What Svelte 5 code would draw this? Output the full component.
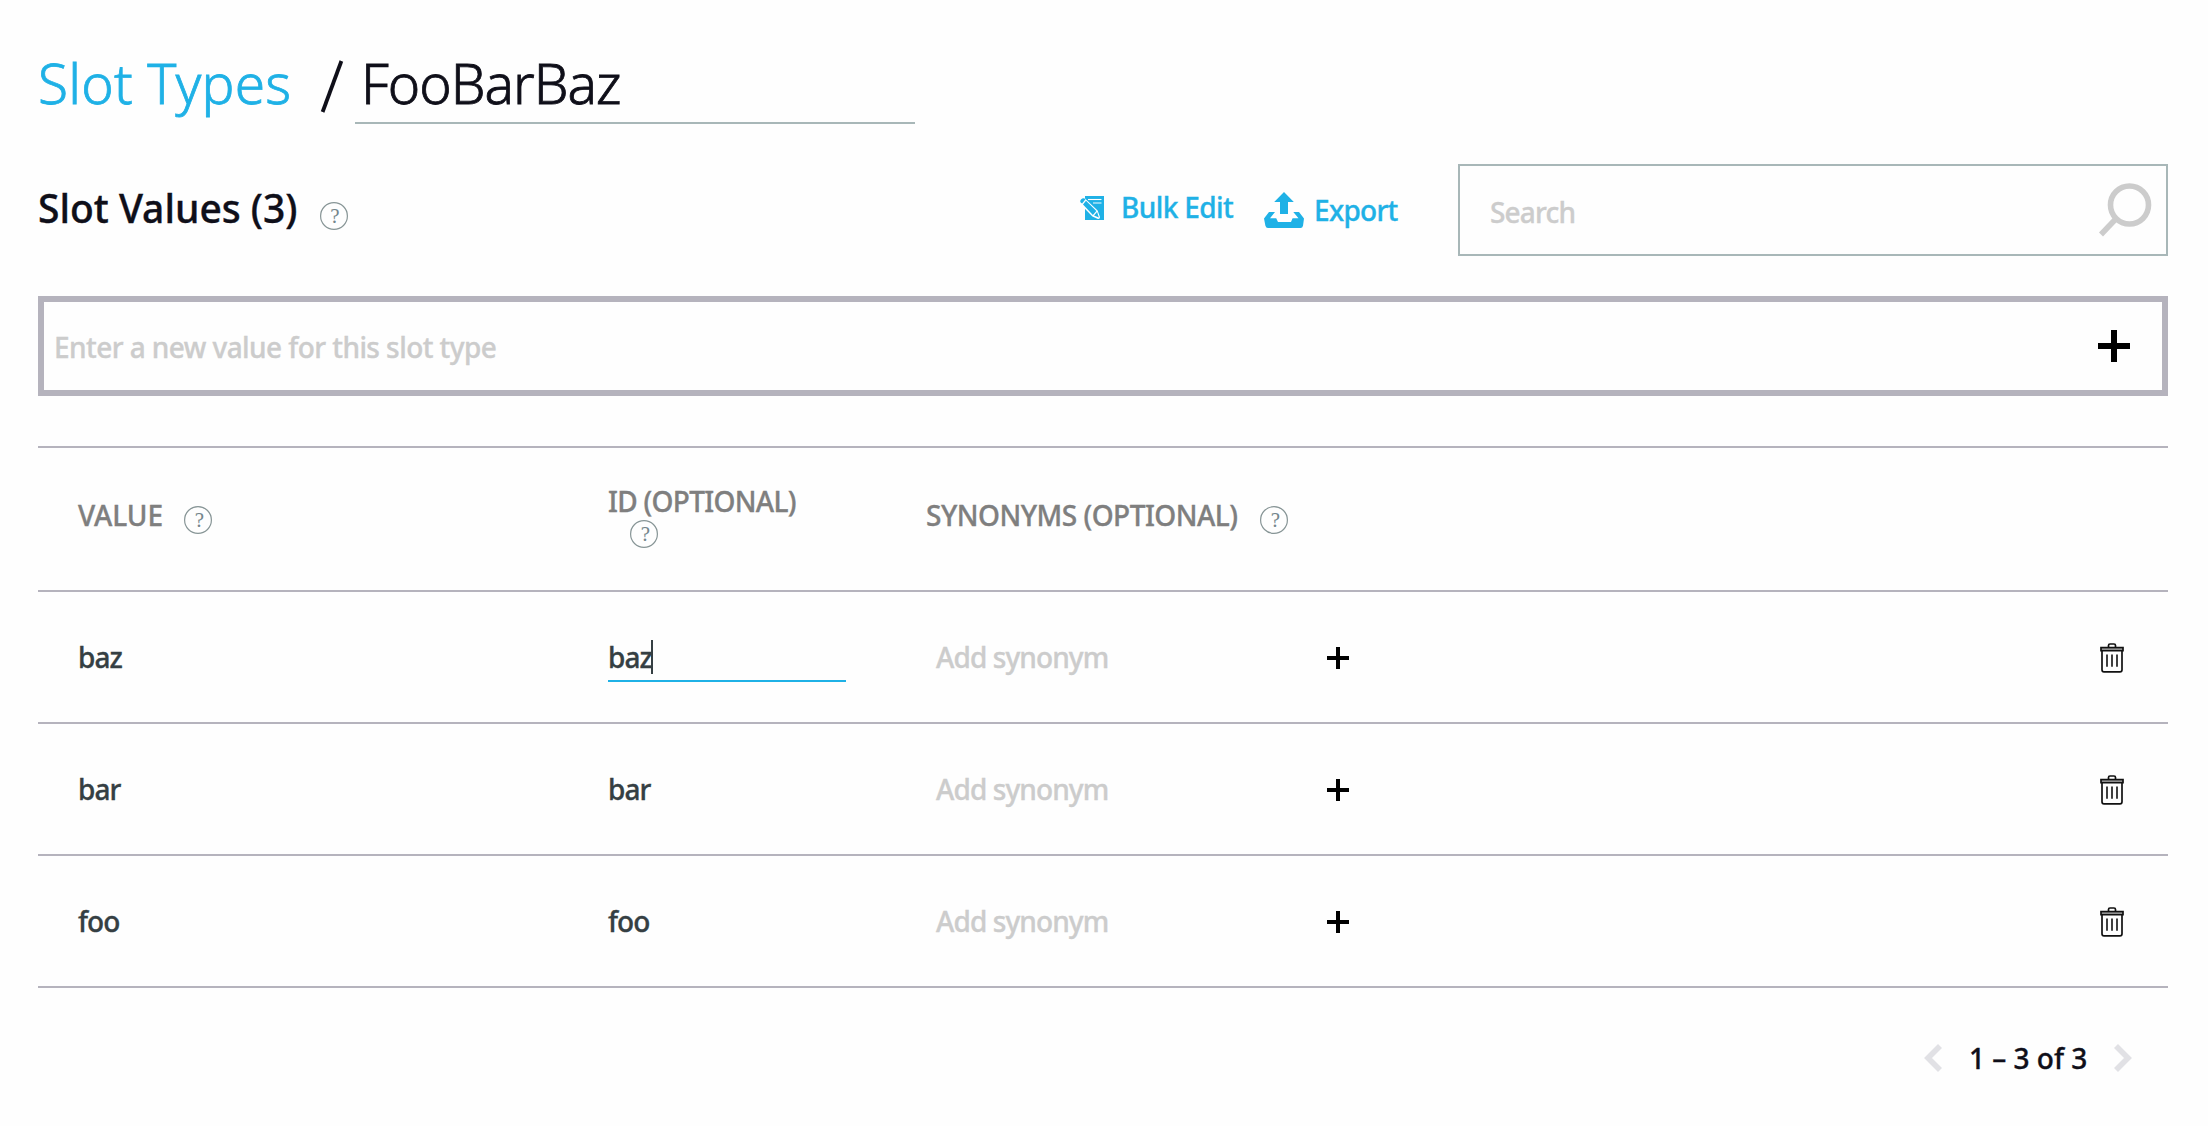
<script>
  let slotName = $state('FooBarBaz');
  let rows = $state([
    { value: 'baz', id: 'baz', editing: true },
    { value: 'bar', id: 'bar', editing: false },
    { value: 'foo', id: 'foo', editing: false }
  ]);
</script>

{#snippet help()}
  <svg class="help" viewBox="0 0 28 28" aria-label="Help">
    <circle cx="14" cy="14" r="13.4" />
    <text x="15" y="21" text-anchor="middle">?</text>
  </svg>
{/snippet}

{#snippet plus(size, thick)}
  <svg class="plus" width={size} height={size} viewBox="0 0 {size} {size}">
    <path d="M{size / 2} 0V{size}M0 {size / 2}H{size}" stroke-width={thick} />
  </svg>
{/snippet}

<main>
  <header>
    <a class="crumb">Slot Types</a>
    <svg class="slash" viewBox="0 0 22 51"><path d="M1.6 51L20.4 0" /></svg>
    <div class="name">{slotName}</div>
  </header>

  <section class="toolbar">
    <h2>Slot Values ({rows.length})</h2>
    <span class="title-help">{@render help()}</span>
    <a class="bulk">
      <svg width="24" height="24" viewBox="0 0 24 24">
        <path d="M5 0H24V24H5z" fill="#1fb1e6" />
        <path d="M8 3.5H21.5" stroke="#fff" stroke-width="1.1" />
        <path d="M13 7H21.5" stroke="#fff" stroke-width="1.6" opacity=".6" />
        <path d="M0 5.2Q0 4 1 3L2.6 1.9Q4 1.5 5 2.5L17.6 14.6L20 21Q20 23.2 18 23L12.4 20.4L.8 8.4Q0 7 0 5.2z" fill="#fff" />
        <path d="M.2 5.5Q.2 4.4 1.2 3.3T3.4 2.2Q4.6 2.2 5.5 3.3L2.1 7.4Q.2 6.4 .2 5.5z" fill="#1fb1e6" />
        <path d="M6 4.8L16.4 15L12.9 19L3 8.6z" fill="#1fb1e6" />
        <path d="M17.1 16L18.9 21.5L14 19.6z" fill="#1fb1e6" />
      </svg>
      <span>Bulk Edit</span>
    </a>
    <a class="export">
      <svg width="40" height="36" viewBox="0 0 40 36">
        <path d="M20 0L29.8 10H24V22H16V10H10.2z" fill="#1fb1e6" />
        <path d="M5 20H11L6 26.3H12.2L14 30H27L28.6 26.3H34.5L29.3 20H35L40 26.5L39 33.8Q38.5 36 36.5 36H4Q2 36 1.4 33.8L0 26.5z" fill="#1fb1e6" />
      </svg>
      <span>Export</span>
    </a>
    <div class="search">
      <span>Search</span>
      <svg width="54" height="54" viewBox="0 0 54 54">
        <circle cx="31.5" cy="22" r="19" />
        <path d="M18.2 35.5L3 51.5" />
      </svg>
    </div>
  </section>

  <section class="new-value">
    <span>Enter a new value for this slot type</span>
    {@render plus(32, 6)}
  </section>

  <section class="table">
    <div class="row head">
      <div class="cell"><span class="v">VALUE</span>{@render help()}</div>
      <div class="cell stacked"><span class="i">ID (OPTIONAL)</span>{@render help()}</div>
      <div class="cell"><span class="s">SYNONYMS (OPTIONAL)</span>{@render help()}</div>
    </div>
    {#each rows as row}
      <div class="row">
        <div class="cell">{row.value}</div>
        <div class="cell">
          <div class="field" class:editing={row.editing}>
            <span>{row.id}</span>{#if row.editing}<i class="caret"></i>{/if}
          </div>
        </div>
        <div class="cell synonyms">
          <span class="add">Add synonym</span>
          {@render plus(22, 4)}
          <svg class="trash" width="24" height="30" viewBox="0 0 24 30">
            <path d="M8.5 4V2.4Q8.5 1 10 1H14Q15.5 1 15.5 2.4V4" />
            <path d="M1 4.6H23V7.6H1z" fill="#bbb" />
            <path d="M2 8V26.7Q2 28.8 4 28.8H20Q22 28.8 22 26.7V8" />
            <path class="ribs" d="M7 11.5V23.8M12 11.5V23.8M17 11.5V23.8" />
          </svg>
        </div>
      </div>
    {/each}
  </section>

  <footer>
    <svg width="18" height="28" viewBox="0 0 18 28"><path d="M16 2L4 14L16 26" /></svg>
    <span>1 – {rows.length} of {rows.length}</span>
    <svg width="18" height="28" viewBox="0 0 18 28"><path d="M2 2L14 14L2 26" /></svg>
  </footer>
</main>

<style>
  :global(body) {
    background: #fefefe;
  }
  main {
    box-sizing: border-box;
    height: 1126px;
    padding: 41px 40px 0 38px;
    font: 500 28px/40px 'Noto Sans', 'Open Sans', sans-serif;
    color: #0f0f19;
    white-space: nowrap;
    overflow: hidden;
    -webkit-text-stroke: 0.35px;
  }
  svg {
    display: block;
    flex: none;
    fill: none;
    overflow: visible;
  }
  header {
    display: flex;
    height: 83px;
    font-size: 55px;
    font-weight: 300;
    line-height: 83px;
    -webkit-text-stroke: 0.8px;
  }
  .crumb {
    width: 283px;
    box-sizing: border-box;
    color: #1fb1e6;
    letter-spacing: 0.2px;
  }
  .slash {
    width: 22px;
    height: 51px;
    margin: 20px 12px 0 0;
    stroke: #0f0f19;
    stroke-width: 3.8;
  }
  .name {
    box-sizing: border-box;
    width: 560px;
    padding-left: 6px;
    border-bottom: 2px solid #a8b7b8;
    letter-spacing: -1px;
  }
  .toolbar {
    display: flex;
    align-items: center;
    height: 92px;
    margin-top: 40px;
  }
  h2 {
    width: 282px;
    margin: 0;
    padding: 0 0 5px;
    box-sizing: border-box;
    font-size: 39px;
    font-weight: 500;
    line-height: 50px;
    letter-spacing: 0;
  }
  .title-help {
    padding-top: 12px;
  }
  .help {
    width: 28px;
    height: 28px;
    stroke: #879596;
    stroke-width: 1.2;
  }
  .help text {
    fill: #74868c;
    stroke: none;
    font: 400 21px 'Liberation Serif', serif;
  }
  .bulk,
  .export {
    display: flex;
    align-items: center;
    color: #1fb1e6;
  }
  .bulk {
    width: 184px;
    margin-left: 732px;
    padding-bottom: 6px;
    gap: 17px;
    letter-spacing: -0.6px;
  }
  .bulk svg {
    margin-top: 2px;
  }
  .export {
    width: 194px;
    gap: 10px;
    padding-bottom: 2px;
    letter-spacing: -0.7px;
  }
  .export span {
    padding-top: 1px;
  }
  .export svg {
    margin-top: 2px;
  }
  .search {
    display: flex;
    align-items: center;
    justify-content: space-between;
    box-sizing: border-box;
    flex: 1;
    height: 92px;
    padding: 2px 14px 0 30px;
    border: 2px solid #a8b7b8;
    color: #ccc;
    letter-spacing: -0.8px;
  }
  .search span {
    padding-top: 1px;
  }
  .search svg {
    margin-bottom: 2px;
    stroke: #ccc;
    stroke-width: 5.6;
  }
  .new-value {
    display: flex;
    align-items: center;
    justify-content: space-between;
    box-sizing: border-box;
    height: 100px;
    margin-top: 40px;
    padding: 0 32px 0 10px;
    border: 6px solid #b5b3bd;
    color: #ccc;
    letter-spacing: -0.57px;
  }
  .new-value span {
    padding-top: 2px;
  }
  .plus {
    stroke: #000;
  }
  .table {
    margin-top: 50px;
    border-top: 2px solid #b5b3bd;
  }
  .row {
    display: grid;
    grid-template-columns: 530px 318px 1fr;
    align-items: center;
    height: 130px;
    padding-left: 40px;
    border-bottom: 2px solid #b5b3bd;
    color: #353f43;
    letter-spacing: -0.9px;
  }
  .cell {
    display: flex;
    align-items: center;
  }
  .head {
    height: 142px;
    color: #7f7f7f;
  }
  .head .cell {
    align-items: flex-start;
    padding-bottom: 8px;
  }
  .head .cell .help {
    margin-top: 11px;
  }
  .v {
    width: 106px;
    letter-spacing: -0.1px;
  }
  .i {
    letter-spacing: -0.7px;
  }
  .s {
    width: 334px;
    letter-spacing: -0.5px;
  }
  .head .stacked {
    flex-direction: column;
    padding-bottom: 9px;
  }
  .head .stacked .help {
    margin: -1px 0 0 22px;
  }
  .field {
    display: flex;
    align-items: center;
    box-sizing: border-box;
    width: 238px;
    height: 50px;
    border-bottom: 2px solid transparent;
    border-top: 2px solid transparent;
  }
  .editing {
    border-bottom-color: #1fb1e6;
  }
  .caret {
    width: 2px;
    height: 34px;
    margin-left: -1px;
    background: #353f43;
  }
  .add {
    width: 391px;
    padding-left: 10px;
    color: #ccc;
    letter-spacing: -0.9px;
  }
  .synonyms .plus {
    margin-top: 2px;
  }
  .trash {
    margin: 2px 44px 0 auto;
    stroke: #111;
    stroke-width: 1.7;
  }
  .ribs {
    stroke-width: 1.6;
  }
  footer {
    display: flex;
    align-items: center;
    justify-content: flex-end;
    height: 40px;
    margin-top: 50px;
    padding-right: 36px;
  }
  footer span {
    width: 172px;
    padding: 0 0 1px 27px;
    box-sizing: border-box;
  }
  footer svg {
    stroke: #e1e1e5;
    stroke-width: 5.6;
  }
</style>
